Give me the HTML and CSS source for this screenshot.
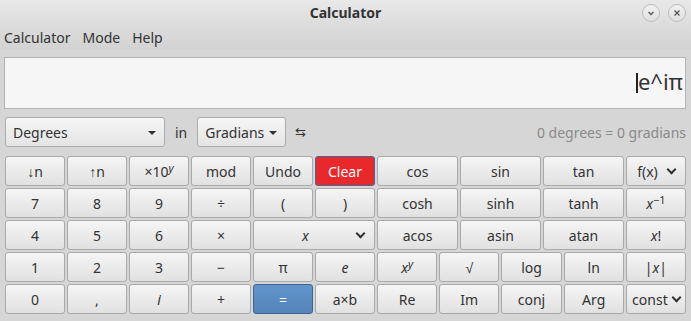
FILE: index.html
```html
<!DOCTYPE html>
<html>
<head>
    <title>Calculator</title>
    <link rel="stylesheet" href="styles.css">
</head>
<body>
    <div class="window">
        <div class="titlebar">
            <span class="title">Calculator</span>
            <div class="win-buttons">
                <span class="win-btn">
                    <svg width="8" height="8" viewBox="0 0 8 8"><path d="M1.5 3 L4 5.5 L6.5 3" fill="none" stroke="#555" stroke-width="1.3"/></svg>
                </span>
                <span class="win-btn">
                    <svg width="8" height="8" viewBox="0 0 8 8"><path d="M1.5 1.5 L6.5 6.5 M6.5 1.5 L1.5 6.5" fill="none" stroke="#555" stroke-width="1.3"/></svg>
                </span>
            </div>
        </div>

        <div class="menubar">
            <span>Calculator</span>
            <span>Mode</span>
            <span>Help</span>
        </div>

        <div class="content">
            <div class="display">
                <span class="cursor"></span>e^iπ
            </div>

            <div class="converter">
                <div class="combo combo-wide">Degrees <span class="arrow"></span></div>
                <span class="in">in</span>
                <div class="combo">Gradians <span class="arrow"></span></div>
                <span class="swap">&#8646;</span>
                <span class="result">0 degrees = 0 gradians</span>
            </div>

            <div class="keypad">
                <div class="row row-trig">
                    <button>↓n</button>
                    <button>↑n</button>
                    <button>×10<sup><i>y</i></sup></button>
                    <button>mod</button>
                    <button>Undo</button>
                    <button class="clear">Clear</button>
                    <button>cos</button>
                    <button>sin</button>
                    <button>tan</button>
                    <button class="drop"><span>f(x)</span><span class="chev"></span></button>
                </div>
                <div class="row row-trig">
                    <button>7</button>
                    <button>8</button>
                    <button>9</button>
                    <button>÷</button>
                    <button>(</button>
                    <button>)</button>
                    <button>cosh</button>
                    <button>sinh</button>
                    <button>tanh</button>
                    <button><i>x</i><sup>−1</sup></button>
                </div>
                <div class="row row-trig">
                    <button>4</button>
                    <button>5</button>
                    <button>6</button>
                    <button>×</button>
                    <button class="span2 drop drop-wide"><i>x</i><span class="chev"></span></button>
                    <button>acos</button>
                    <button>asin</button>
                    <button>atan</button>
                    <button><i>x</i>!</button>
                </div>
                <div class="row row-fn">
                    <button>1</button>
                    <button>2</button>
                    <button>3</button>
                    <button>−</button>
                    <button>π</button>
                    <button><i>e</i></button>
                    <button><i>x</i><sup><i>y</i></sup></button>
                    <button>√</button>
                    <button>log</button>
                    <button>ln</button>
                    <button>|<i>x</i>|</button>
                </div>
                <div class="row row-fn">
                    <button>0</button>
                    <button>,</button>
                    <button><i>i</i></button>
                    <button>+</button>
                    <button class="equals">=</button>
                    <button>a×b</button>
                    <button>Re</button>
                    <button>Im</button>
                    <button>conj</button>
                    <button>Arg</button>
                    <button class="drop drop-tight"><span>const</span><span class="chev"></span></button>
                </div>
            </div>
        </div>
    </div>
</body>
</html>
```

FILE: styles.css
```css
body {
    margin: 0;
    font-family: "Noto Sans", sans-serif;
    font-size: 14px;
    color: #333;
    background: #d6d6d6;
}
.window {
    width: 691px;
    height: 321px;
    overflow: hidden;
}
.titlebar {
    position: relative;
    height: 25px;
    display: flex;
    align-items: center;
    justify-content: center;
    background: linear-gradient(#e9e9e9, #dcdcdc);
}
.title {
    font-weight: bold;
    font-size: 14px;
    color: #333;
}
.win-buttons {
    position: absolute;
    right: 5px;
    top: 4px;
    display: flex;
    gap: 8px;
}
.win-btn {
    width: 16px;
    height: 16px;
    border-radius: 50%;
    border: 1px solid #bdbdbd;
    background: linear-gradient(#f2f2f2, #dedede);
    display: flex;
    align-items: center;
    justify-content: center;
}
.menubar {
    height: 24px;
    display: flex;
    align-items: center;
    gap: 12px;
    padding-left: 4px;
    background: linear-gradient(#dcdcdc, #d3d3d3);
}
.content {
    padding: 8px 5px 0 5px;
}
.display {
    margin-left: -1px;
    border: 1px solid #b3b3b3;
    background: #f6f6f6;
    text-align: right;
    font-size: 22px;
    line-height: 26px;
    padding: 10px 2px 0 0;
    box-sizing: border-box;
    height: 52px;
    color: #333;
}
.cursor {
    display: inline-block;
    width: 2px;
    height: 20px;
    background: #222;
    vertical-align: -3px;
}
.converter {
    display: flex;
    align-items: center;
    height: 30px;
    margin-top: 8px;
}
.combo {
    height: 30px;
    box-sizing: border-box;
    border: 1px solid #ababab;
    border-radius: 3px;
    background: linear-gradient(#f6f6f6, #e4e4e4);
    display: flex;
    align-items: center;
    justify-content: space-between;
    padding: 0 7px 0 7px;
    width: 89px;
}
.combo-wide {
    width: 160px;
}
.arrow {
    width: 0;
    height: 0;
    border-left: 4px solid transparent;
    border-right: 4px solid transparent;
    border-top: 4px solid #333;
    margin-top: 1px;
    margin-right: 1px;
}
.in {
    margin: 0 10px 0 10px;
}
.swap {
    margin-left: 9px;
    font-size: 13px;
}
.result {
    margin-left: auto;
    color: #8a8a8a;
    font-size: 14px;
}
.keypad {
    margin-top: 9px;
    display: flex;
    flex-direction: column;
    gap: 2px;
}
.row {
    display: grid;
    height: 30px;
    column-gap: 2px;
}
.row-trig {
    grid-template-columns: repeat(6, 60px) repeat(3, 1fr) 60px;
}
.row-fn {
    grid-template-columns: repeat(6, 60px) repeat(5, 1fr);
}
.span2 {
    grid-column: span 2;
}
button {
    font-family: "Noto Sans", sans-serif;
    font-size: 14px;
    color: #333;
    border: 1px solid #a9a9a9;
    border-radius: 3px;
    background: linear-gradient(#f5f5f5, #e1e1e1);
    padding: 0;
    margin: 0;
    text-align: center;
}
button sup {
    font-size: 11px;
    line-height: 0;
    vertical-align: 5px;
}
.clear {
    background: #e8282b;
    border-color: #3d6a9e;
    color: #fff;
}
.equals {
    background: linear-gradient(#6195cb, #5483b8);
    border-color: #3a6596;
    color: #fff;
}
.drop {
    display: flex;
    align-items: center;
    justify-content: center;
    gap: 10px;
}
.drop-tight {
    gap: 5px;
}
.drop-wide {
    justify-content: flex-start;
    padding: 0 10px 0 48px;
}
.drop-wide .chev {
    margin-left: auto;
}
.chev {
    display: inline-block;
    width: 5px;
    height: 5px;
    border-right: 2px solid #333;
    border-bottom: 2px solid #333;
    transform: rotate(45deg);
    margin-top: -4px;
}
```
